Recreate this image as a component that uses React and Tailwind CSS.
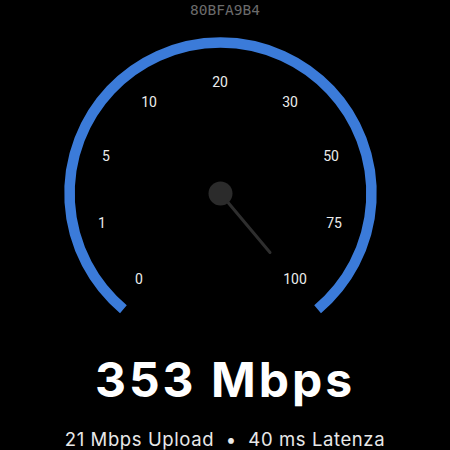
import React from "react";

const labels = [
  { t: "0", x: 139, y: 279 },
  { t: "1", x: 102, y: 223 },
  { t: "5", x: 106, y: 156 },
  { t: "10", x: 149, y: 102 },
  { t: "20", x: 220, y: 82 },
  { t: "30", x: 290, y: 102 },
  { t: "50", x: 331, y: 156 },
  { t: "75", x: 334, y: 223 },
  { t: "100", x: 295, y: 279 },
];

function Gauge() {
  // arc runs from 130deg over the top to 50deg, center (220.5, 193.5)
  return (
    <svg width="450" height="336" viewBox="0 20 450 336" className="block">
      <path
        d="M 123.4 309.2 A 151 151 0 1 1 317.6 309.2"
        fill="none"
        stroke="#3b7bd9"
        strokeWidth="10.5"
      />
      {labels.map((l) => (
        <text
          key={l.t}
          x={l.x}
          y={l.y}
          textAnchor="middle"
          dominantBaseline="central"
          fill="#ececec"
          fontSize="14"
          fontFamily="Roboto, sans-serif"
        >
          {l.t}
        </text>
      ))}
      <line x1="220.5" y1="193.5" x2="270" y2="252.5" stroke="#2e2e2e" strokeWidth="3" strokeLinecap="round" />
      <circle cx="220.5" cy="193.5" r="12" fill="#2b2b2b" />
    </svg>
  );
}

export default function App() {
  return (
    <div className="w-[450px] h-[450px] bg-black overflow-hidden flex flex-col items-center">
      <p className="text-[14.5px] leading-[20px] text-[#6b6b6b] font-['DejaVu_Sans_Mono',monospace]">80BFA9B4</p>
      <Gauge />
      <h1 className="text-[48px] leading-[48px] font-bold tracking-[3px] text-white font-['Inter',sans-serif]">353 Mbps</h1>
      <p className="mt-[26px] text-[18.5px] leading-[19px] tracking-[0.6px] text-[#e8e8e8] font-['Inter',sans-serif] whitespace-pre">
        21 Mbps Upload  •  40 ms Latenza
      </p>
    </div>
  );
}
